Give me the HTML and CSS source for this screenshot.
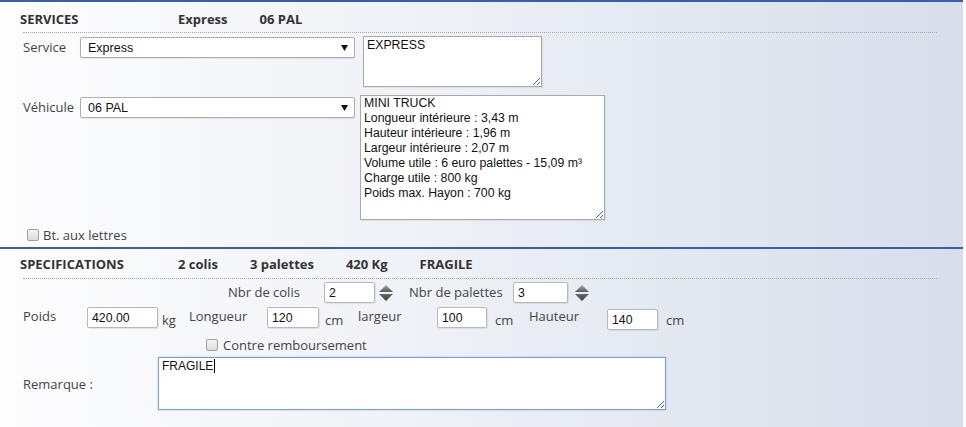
FILE: index.html
```html
<!DOCTYPE html>
<html lang="fr">
<head>
<meta charset="utf-8">
<title>Services</title>
<link rel="stylesheet" href="styles.css">
</head>
<body>
<div class="page">
  <section class="block block-services">
    <div class="head">
      <span class="title">SERVICES</span>
      <span class="sum">Express</span>
      <span class="sum">06 PAL</span>
    </div>
    <div class="sep"></div>

    <div class="frow frow-service">
      <label class="lbl">Service</label>
      <div class="sel">
        <select><option>Express</option></select>
        <svg class="arrow" width="7" height="6" viewBox="0 0 7 6"><polygon points="0,0 7,0 3.5,6" fill="#111"/></svg>
      </div>
      <textarea class="ta ta-service">EXPRESS</textarea>
    </div>

    <div class="frow frow-vehicule">
      <label class="lbl">Véhicule</label>
      <div class="sel">
        <select><option>06 PAL</option></select>
        <svg class="arrow" width="7" height="6" viewBox="0 0 7 6"><polygon points="0,0 7,0 3.5,6" fill="#111"/></svg>
      </div>
      <textarea class="ta ta-vehicule">MINI TRUCK
Longueur intérieure : 3,43 m
Hauteur intérieure : 1,96 m
Largeur intérieure : 2,07 m
Volume utile : 6 euro palettes - 15,09 m³
Charge utile : 800 kg
Poids max. Hayon : 700 kg</textarea>
    </div>

    <div class="crow crow-bal">
      <input type="checkbox" class="cb" id="bal">
      <label for="bal" class="clbl">Bt. aux lettres</label>
    </div>
  </section>

  <section class="block block-specs">
    <div class="head">
      <span class="title">SPECIFICATIONS</span>
      <span class="sum">2 colis</span>
      <span class="sum">3 palettes</span>
      <span class="sum">420 Kg</span>
      <span class="sum">FRAGILE</span>
    </div>
    <div class="sep"></div>

    <div class="srow srow-counts">
      <span class="lbl w-colis">Nbr de colis</span>
      <input class="inp w51" value="2">
      <svg class="spin" width="14" height="16" viewBox="0 0 14 16">
        <defs>
          <linearGradient id="gu" x1="0" y1="0" x2="0" y2="1"><stop offset="0" stop-color="#a8a8a8"/><stop offset="1" stop-color="#5a5a5a"/></linearGradient>
          <linearGradient id="gd" x1="0" y1="0" x2="0" y2="1"><stop offset="0" stop-color="#6a6a6a"/><stop offset="1" stop-color="#3c3c3c"/></linearGradient>
        </defs>
        <polygon points="7,0 14,7 0,7" fill="url(#gu)"/>
        <polygon points="0,9 14,9 7,16" fill="url(#gd)"/>
      </svg>
      <span class="lbl w-pal">Nbr de palettes</span>
      <input class="inp w55" value="3">
      <svg class="spin spin2" width="14" height="16" viewBox="0 0 14 16">
        <polygon points="7,0 14,7 0,7" fill="url(#gu)"/>
        <polygon points="0,9 14,9 7,16" fill="url(#gd)"/>
      </svg>
    </div>

    <div class="srow srow-dims">
      <span class="lbl w-poids">Poids</span>
      <input class="inp w71" value="420.00">
      <span class="unit u-kg">kg</span>
      <span class="lbl w-long">Longueur</span>
      <input class="inp w52" value="120">
      <span class="unit u-cm1">cm</span>
      <span class="lbl w-larg">largeur</span>
      <input class="inp w50" value="100">
      <span class="unit u-cm2">cm</span>
      <span class="lbl w-haut">Hauteur</span>
      <input class="inp w51 low" value="140">
      <span class="unit u-cm3">cm</span>
    </div>

    <div class="crow crow-cr">
      <input type="checkbox" class="cb" id="cr">
      <label for="cr" class="clbl">Contre remboursement</label>
    </div>

    <div class="frow frow-rem">
      <label class="lbl w-rem">Remarque :</label>
      <div class="ta-wrap">
        <textarea class="ta ta-rem">FRAGILE</textarea>
        <span class="caret"></span>
      </div>
    </div>
  </section>
</div>
</body>
</html>
```

FILE: styles.css
```css
html, body {
  margin: 0;
  padding: 0;
  background: #ffffff;
}

.page {
  width: 963px;
  height: 427px;
  background: linear-gradient(to right, #fdfdfe 0%, #eef1f6 45%, #d7deea 100%);
  font-family: "Open Sans", "Liberation Sans", sans-serif;
  font-size: 13px;
  color: #444;
  overflow: hidden;
}

.block {
  border-top: 2px solid #3b5ea6;
}

.head {
  display: flex;
  align-items: center;
  height: 30px;
  box-sizing: border-box;
  padding: 4px 0 0 20px;
  font-weight: 700;
  font-size: 13px;
  color: #333;
}

.block-specs .head {
  height: 29px;
  padding-top: 1px;
}

.title {
  width: 158px;
}

.sum {
  margin-right: 32px;
}

.sep {
  margin: 0 26px 0 23px;
  border-top: 1px dotted #a8a8a8;
}

.frow {
  display: flex;
  align-items: flex-start;
  padding-left: 23px;
}

.lbl {
  display: block;
  line-height: 21px;
  height: 21px;
  white-space: nowrap;
}

.frow .lbl {
  width: 57px;
}

.frow-service {
  margin-top: 3px;
}

.frow-service .lbl,
.frow-service .sel {
  margin-top: 1px;
}

.frow-vehicule {
  margin-top: 8px;
}

.frow-vehicule .lbl,
.frow-vehicule .sel {
  margin-top: 2px;
}

.sel {
  position: relative;
  width: 275px;
  height: 21px;
}

.sel select {
  appearance: none;
  -webkit-appearance: none;
  width: 275px;
  height: 21px;
  box-sizing: border-box;
  border: 1px solid #adadad;
  border-radius: 2px;
  background: #ffffff;
  box-shadow: 0 1px 1px rgba(0, 0, 0, 0.08);
  font-family: "Liberation Sans", Arial, sans-serif;
  font-size: 12.5px;
  color: #111;
  padding: 0 0 0 7px;
  margin: 0;
}

.sel .arrow {
  position: absolute;
  right: 7px;
  top: 8px;
}

.ta {
  display: block;
  box-sizing: border-box;
  border: 1px solid #a9a9a9;
  background: #fff;
  box-shadow: 1px 1px 1px rgba(0, 0, 0, 0.06);
  font-family: "Liberation Sans", Arial, sans-serif;
  font-size: 12.3px;
  line-height: 15px;
  color: #111;
  padding: 1px 3px;
  margin: 0;
  resize: both;
  overflow: hidden;
}

.ta-service {
  margin-left: 8px;
  width: 179px;
  height: 51px;
}

.ta-vehicule {
  margin-left: 5px;
  width: 245px;
  height: 125px;
  padding-top: 0;
}

.crow {
  display: flex;
  align-items: center;
  height: 16px;
}

.crow-bal {
  margin-top: 7px;
  margin-bottom: 4px;
  padding-left: 27px;
}

.crow-cr {
  margin-top: 6px;
  padding-left: 206px;
}

.cb {
  appearance: none;
  -webkit-appearance: none;
  width: 12px;
  height: 12px;
  margin: 0 5px 0 0;
  box-sizing: border-box;
  border: 1px solid #a0a0a0;
  border-radius: 2px;
  background: linear-gradient(#f4f4f4, #dcdcdc);
}

.crow-bal .cb {
  margin-right: 4px;
}

.clbl {
  line-height: 16px;
  white-space: nowrap;
}

.srow {
  display: flex;
  align-items: flex-start;
}

.srow-counts {
  margin-top: 3px;
  padding-left: 228px;
}

.w-colis { width: 96px; }
.w-pal { width: 104px; margin-left: 16px; }

.spin {
  display: block;
  margin: 3px 0 0 4px;
}

.spin2 {
  margin-left: 7px;
}

.srow-dims {
  margin-top: 4px;
  padding-left: 23px;
}

.w-poids { width: 64px; }
.w-long { width: 78px; }
.w-larg { width: 79px; }
.w-haut { width: 78px; }

.srow-dims .lbl {
  line-height: 19px;
}

.unit {
  display: block;
  line-height: 21px;
  padding-top: 3px;
}

.u-kg { margin-left: 4px; width: 27px; }
.u-cm1 { margin-left: 6px; width: 33px; }
.u-cm2 { margin-left: 8px; width: 34px; }
.u-cm3 { margin-left: 8px; }

.inp {
  display: block;
  height: 21px;
  box-sizing: border-box;
  border: 1px solid #b8b8b8;
  border-radius: 2px;
  background: #fff;
  box-shadow: 1px 1px 1px rgba(0, 0, 0, 0.08);
  font-family: "Liberation Sans", Arial, sans-serif;
  font-size: 12.3px;
  color: #111;
  padding: 0 0 0 4px;
  margin: 0;
}

.low {
  margin-top: 2px;
}

.w50 { width: 50px; }
.w51 { width: 51px; }
.w52 { width: 52px; }
.w55 { width: 55px; }
.w71 { width: 71px; }

.frow-rem {
  margin-top: 4px;
  align-items: center;
}

.frow .w-rem {
  width: 135px;
  margin-top: 2px;
}

.ta-wrap {
  position: relative;
}

.ta-rem {
  width: 508px;
  height: 53px;
  font-size: 12px;
  border-color: #7a9fe0;
  box-shadow: 0 0 2px rgba(90, 140, 220, 0.45);
  padding: 1px 3px;
}

.caret {
  position: absolute;
  left: 56px;
  top: 2px;
  width: 1px;
  height: 14px;
  background: #000;
}
```
